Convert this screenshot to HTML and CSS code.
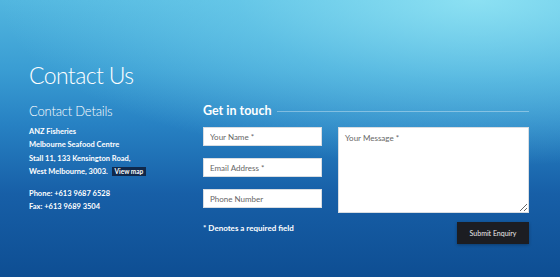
FILE: index.html
```html
<!DOCTYPE html>
<html lang="en">
<head>
    <meta charset="UTF-8">
    <meta name="viewport" content="width=device-width, initial-scale=1.0">
    <title>Contact Us</title>
    <link rel="stylesheet" href="styles.css">
</head>
<body>
    <div class="page">
        <h1>Contact Us</h1>

        <div class="columns">
            <div class="details">
                <h2>Contact Details</h2>
                <p class="address">
                    ANZ Fisheries<br>
                    Melbourne Seafood Centre<br>
                    Stall 11, 133 Kensington Road,<br>
                    West Melbourne, 3003. <a class="map-link" href="#">View map</a>
                </p>
                <p class="phones">
                    Phone: +613 9687 6528<br>
                    Fax: +613 9689 3504
                </p>
            </div>

            <form class="enquiry" onsubmit="return false">
                <div class="form-title">
                    <h2>Get in touch</h2>
                    <span class="rule"></span>
                </div>
                <div class="fields">
                    <div class="inputs">
                        <input type="text" placeholder="Your Name *">
                        <input type="email" placeholder="Email Address *">
                        <input type="tel" placeholder="Phone Number">
                    </div>
                    <textarea placeholder="Your Message *"></textarea>
                </div>
                <div class="form-foot">
                    <span class="note">* Denotes a required field</span>
                    <button type="submit">Submit Enquiry</button>
                </div>
            </form>
        </div>
    </div>
</body>
</html>
```

FILE: styles.css
```css
* {
    margin: 0;
    padding: 0;
    box-sizing: border-box;
}

html, body {
    height: 100%;
}

body {
    font-family: 'Lato', sans-serif;
    color: white;
    background:
        radial-gradient(ellipse 85% 60% at 85% 0%, rgba(150, 232, 246, 0.85) 0%, rgba(120, 215, 240, 0.5) 50%, rgba(90, 190, 230, 0) 100%),
        linear-gradient(to bottom, #52b6df 0%, #3a9dd3 25%, #2781c3 45%, #175fa7 70%, #0e4e93 100%);
    overflow: hidden;
}

.page {
    padding: 60px 31px 0 29px;
}

h1 {
    font-weight: 300;
    font-size: 23px;
    line-height: 30px;
    letter-spacing: -0.6px;
}

.columns {
    display: flex;
    margin-top: 12px;
}

.details {
    width: 174px;
}

.details h2 {
    font-weight: 300;
    font-size: 13px;
    line-height: 18px;
    letter-spacing: -0.2px;
    margin-bottom: 5px;
}

.address, .phones {
    font-size: 7.5px;
    font-weight: 700;
    line-height: 13.4px;
}

.phones {
    margin-top: 8px;
}

.map-link {
    display: inline-block;
    background: #10284a;
    color: white;
    text-decoration: none;
    font-size: 6.5px;
    font-weight: 700;
    line-height: 9px;
    padding: 0 3px;
    margin-left: 2px;
}

.enquiry {
    flex-grow: 1;
}

.form-title {
    display: flex;
    align-items: center;
    gap: 6px;
}

.form-title h2 {
    font-weight: 700;
    font-size: 12.5px;
    line-height: 18px;
}

.rule {
    flex-grow: 1;
    height: 1px;
    background: rgba(255, 255, 255, 0.35);
    margin-top: 1px;
}

.fields {
    display: flex;
    gap: 16px;
    margin-top: 7px;
}

.inputs {
    display: flex;
    flex-direction: column;
    gap: 12px;
}

input, textarea {
    font-family: 'Lato', sans-serif;
    font-size: 8px;
    color: #555;
    background: white;
    border: 1px solid #d8dde2;
    outline: none;
}

input {
    width: 119px;
    height: 19px;
    padding: 0 6px;
}

textarea {
    flex-grow: 1;
    height: 86px;
    padding: 5px 6px;
    resize: vertical;
}

::placeholder {
    color: #666;
}

.form-foot {
    display: flex;
    justify-content: space-between;
    align-items: flex-start;
    margin-top: 9px;
}

.note {
    font-size: 8px;
    font-weight: 700;
    margin-top: 1px;
}

button {
    background: #1c1d22;
    color: #ececec;
    border: none;
    font-family: 'Lato', sans-serif;
    font-size: 7px;
    font-weight: 400;
    width: 72px;
    height: 22px;
    box-shadow: 0 1px 3px rgba(0, 0, 0, 0.3);
    cursor: pointer;
}
```
